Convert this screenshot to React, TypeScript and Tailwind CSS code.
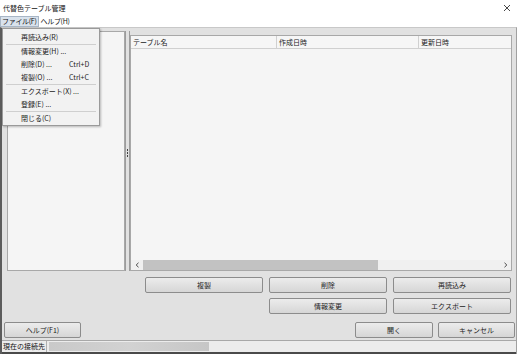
import React from 'react';

const font = { fontFamily: '"Noto Sans CJK JP", "Noto Sans", sans-serif' };

function Btn({ label, w }: { label: string; w: string }) {
  return (
    <div
      className={`${w} h-[16px] flex items-center justify-center rounded-[2px] border border-[#8c8c8c] bg-gradient-to-b from-[#ececec] to-[#d6d6d6] text-[7px] text-[#222] leading-none whitespace-nowrap`}
    >
      {label}
    </div>
  );
}

function MenuItem({ label, accel }: { label: string; accel?: string }) {
  return (
    <div className="h-[13px] flex items-center pl-[18px] pr-[5px] text-[7px] text-[#222] leading-none whitespace-nowrap">
      <span className="flex-1">{label}</span>
      {accel && <span className="w-[25px]">{accel}</span>}
    </div>
  );
}

function Sep() {
  return <div className="h-px mx-[3px] bg-[#cfcfcf]" />;
}

export default function App() {
  return (
    <div className="relative w-[517px] h-[354px] flex flex-col bg-[#e1e1e1] overflow-hidden select-none" style={font}>
      {/* title bar */}
      <div className="h-[16px] bg-white flex items-center justify-between pl-[3px] pr-[6px] text-[7px] text-[#111] leading-none">
        <span>代替色テーブル管理</span>
        <svg width="8" height="8" viewBox="0 0 8 8" className="stroke-[#333]">
          <path d="M1 1 L7 7 M7 1 L1 7" strokeWidth="0.9" />
        </svg>
      </div>

      {/* menu bar */}
      <div className="h-[11px] bg-white flex items-stretch text-[7px] text-[#111] leading-none whitespace-nowrap tracking-[-0.3px]">
        <div className="flex items-center px-[1px] bg-[#d9e2ec] border border-[#a8b6c6]">ファイル(F)</div>
        <div className="flex items-center pl-[2px]">ヘルプ(H)</div>
      </div>

      {/* body */}
      <div className="flex-1 flex flex-col border-l-2 border-l-[#5c5c5c] border-r border-r-[#a0a0a0] border-t border-t-[#c8c8c8] bg-[#e1e1e1]">
        <div className="h-[3px]" />
        <div className="flex h-[240px] pl-[5px]">
          {/* left panel */}
          <div className="w-[118px] h-full border border-[#a8a8a8] bg-[#f5f5f5]" />
          {/* splitter */}
          <div className="w-[5px] h-full flex justify-between">
            <div className="w-px bg-[#9c9c9c]" />
            <div className="flex flex-col justify-center gap-[1px] pt-[4px]">
              <div className="w-[1px] h-[2px] bg-[#444]" />
              <div className="w-[1px] h-[2px] bg-[#444]" />
              <div className="w-[1px] h-[2px] bg-[#444]" />
            </div>
            <div className="w-px bg-[#9c9c9c]" />
          </div>
          {/* table */}
          <div className="mt-[4px] w-[382px] h-[236px] border border-[#a8a8a8] bg-[#f5f5f5] flex flex-col">
            <div className="h-[13px] flex bg-[#f6f6f6] border-b border-[#d0d0d0] text-[7px] text-[#222] leading-none whitespace-nowrap">
              <div className="w-[146px] flex items-center pl-[2px] border-r border-[#d0d0d0]">テーブル名</div>
              <div className="w-[142px] flex items-center pl-[2px] border-r border-[#d0d0d0]">作成日時</div>
              <div className="flex-1 flex items-center pl-[2px]">更新日時</div>
            </div>
            <div className="flex-1" />
            {/* horizontal scrollbar */}
            <div className="h-[10px] flex items-center bg-[#f0f0f0]">
              <div className="w-[12px] flex justify-center">
                <svg width="5" height="6" viewBox="0 0 5 6"><path d="M3.5 0.8 L1.2 3 L3.5 5.2" fill="none" stroke="#444" strokeWidth="1" /></svg>
              </div>
              <div className="w-[235px] h-[10px] bg-[#c2c2c2]" />
              <div className="flex-1" />
              <div className="w-[12px] flex justify-center">
                <svg width="5" height="6" viewBox="0 0 5 6"><path d="M1.5 0.8 L3.8 3 L1.5 5.2" fill="none" stroke="#444" strokeWidth="1" /></svg>
              </div>
            </div>
          </div>
        </div>

        {/* button rows */}
        <div className="mt-[6px] flex gap-[6px] pl-[143px]">
          <Btn label="複製" w="w-[118px]" />
          <Btn label="削除" w="w-[118px]" />
          <Btn label="再読込み" w="w-[118px]" />
        </div>
        <div className="mt-[5px] flex gap-[6px] pl-[267px]">
          <Btn label="情報変更" w="w-[118px]" />
          <Btn label="エクスポート" w="w-[118px]" />
        </div>
        <div className="mt-[8px] flex pl-[2px]">
          <Btn label="ヘルプ(F1)" w="w-[77px]" />
          <div className="flex-1" />
          <Btn label="開く" w="w-[78px]" />
          <div className="w-[5px]" />
          <Btn label="キャンセル" w="w-[77px]" />
          <div className="w-[1px]" />
        </div>
        <div className="flex-1" />
        {/* status bar */}
        <div className="h-[14px] flex items-center border-t border-[#a8a8a8] border-b-2 border-b-[#4a4a4a] bg-[#ececec] text-[7px] text-[#111] leading-none whitespace-nowrap">
          <div className="h-full flex items-center px-[1px] border-r border-[#b0b0b0]">現在の接続先</div>
          <div className="ml-[2px] w-[160px] h-[9px] bg-gradient-to-r from-[#c9c9c9] via-[#d2d2d2] to-[#c6c6c6]" />
        </div>
      </div>

      {/* open file menu */}
      <div className="absolute left-[2px] top-[28px] w-[98px] h-[98px] bg-[#f2f2f2] border border-[#9a9a9a] shadow-[1px_1px_2px_rgba(0,0,0,0.25)] pt-[2px]">
        <MenuItem label="再読込み(R)" />
        <Sep />
        <MenuItem label="情報変更(H) ..." />
        <MenuItem label="削除(D) ..." accel="Ctrl+D" />
        <MenuItem label="複製(O) ..." accel="Ctrl+C" />
        <Sep />
        <MenuItem label="エクスポート(X) ..." />
        <MenuItem label="登録(E) ..." />
        <Sep />
        <MenuItem label="閉じる(C)" />
      </div>
    </div>
  );
}
